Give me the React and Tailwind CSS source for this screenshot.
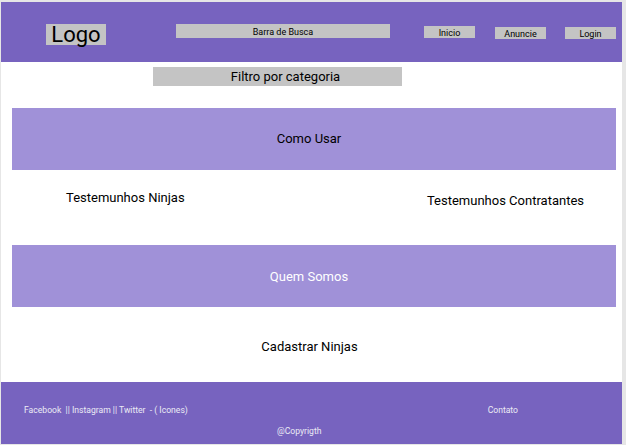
export default function App() {
  const font = { fontFamily: 'Roboto, "Liberation Sans", sans-serif' }

  return (
    <div className="w-[626px] h-[445px] bg-[#e6e6e6] pt-[2px] pl-[1px] pr-[4px] pb-[1px]" style={font}>
      <div className="h-full bg-white flex flex-col">
        {/* cabeçalho */}
        <header className="h-[60px] bg-[#7763bf] flex items-start shrink-0">
          <div className="ml-[45px] mt-[22px] w-[60px] h-[21px] bg-[#c4c4c4] flex items-center justify-center text-[22px] leading-none text-black">
            Logo
          </div>
          <div className="ml-[70px] mt-[22px] w-[214px] h-[14px] bg-[#c4c4c4] flex items-center justify-center pt-[3px] text-[9px] leading-none text-black">
            Barra de Busca
          </div>
          <div className="ml-[34px] mt-[24px] w-[51px] h-[12px] bg-[#c4c4c4] flex items-center justify-center pt-[2px] text-[9px] leading-none text-black">
            Inicio
          </div>
          <div className="ml-[20px] mt-[25px] w-[51px] h-[12px] bg-[#c4c4c4] flex items-center justify-center pt-[2px] text-[9px] leading-none text-black">
            Anuncie
          </div>
          <div className="ml-[19px] mt-[25px] w-[51px] h-[12px] bg-[#c4c4c4] flex items-center justify-center pt-[2px] text-[9px] leading-none text-black">
            Login
          </div>
        </header>

        <div className="ml-[152px] mt-[5px] w-[249px] h-[19px] bg-[#c4c4c4] flex items-center justify-center pl-[16px] text-[13px] text-black">
          Filtro por categoria
        </div>

        <section className="ml-[11px] mt-[22px] w-[604px] h-[62px] bg-[#a091d8] flex items-center justify-center pr-[10px] text-[13px] text-black">
          Como Usar
        </section>

        <div className="h-[75px] flex justify-between items-start text-[13px] text-black">
          <span className="ml-[65px] mt-[18px]">Testemunhos Ninjas</span>
          <span className="mr-[38px] mt-[21px]">Testemunhos Contratantes</span>
        </div>

        <section className="ml-[11px] w-[604px] h-[62px] bg-[#a091d8] flex items-center justify-center pr-[10px] pt-[2px] text-[13px] text-white">
          Quem Somos
        </section>

        <div className="flex-1 flex items-center justify-center text-[13px] text-black pt-[5px] pr-[4px]">
          Cadastrar Ninjas
        </div>

        <footer className="h-[62px] bg-[#7763bf] shrink-0 flex flex-col text-[8.6px] text-[#ecebf5]">
          <div className="flex mt-[22px] leading-[12px]">
            <span className="ml-[23px] whitespace-pre">Facebook  || Instagram || Twitter  - ( Icones)</span>
            <span className="ml-auto mr-[104px]">Contato</span>
          </div>
          <div className="ml-[276px] mt-[9px] leading-[12px]">@Copyrigth</div>
        </footer>
      </div>
    </div>
  )
}
